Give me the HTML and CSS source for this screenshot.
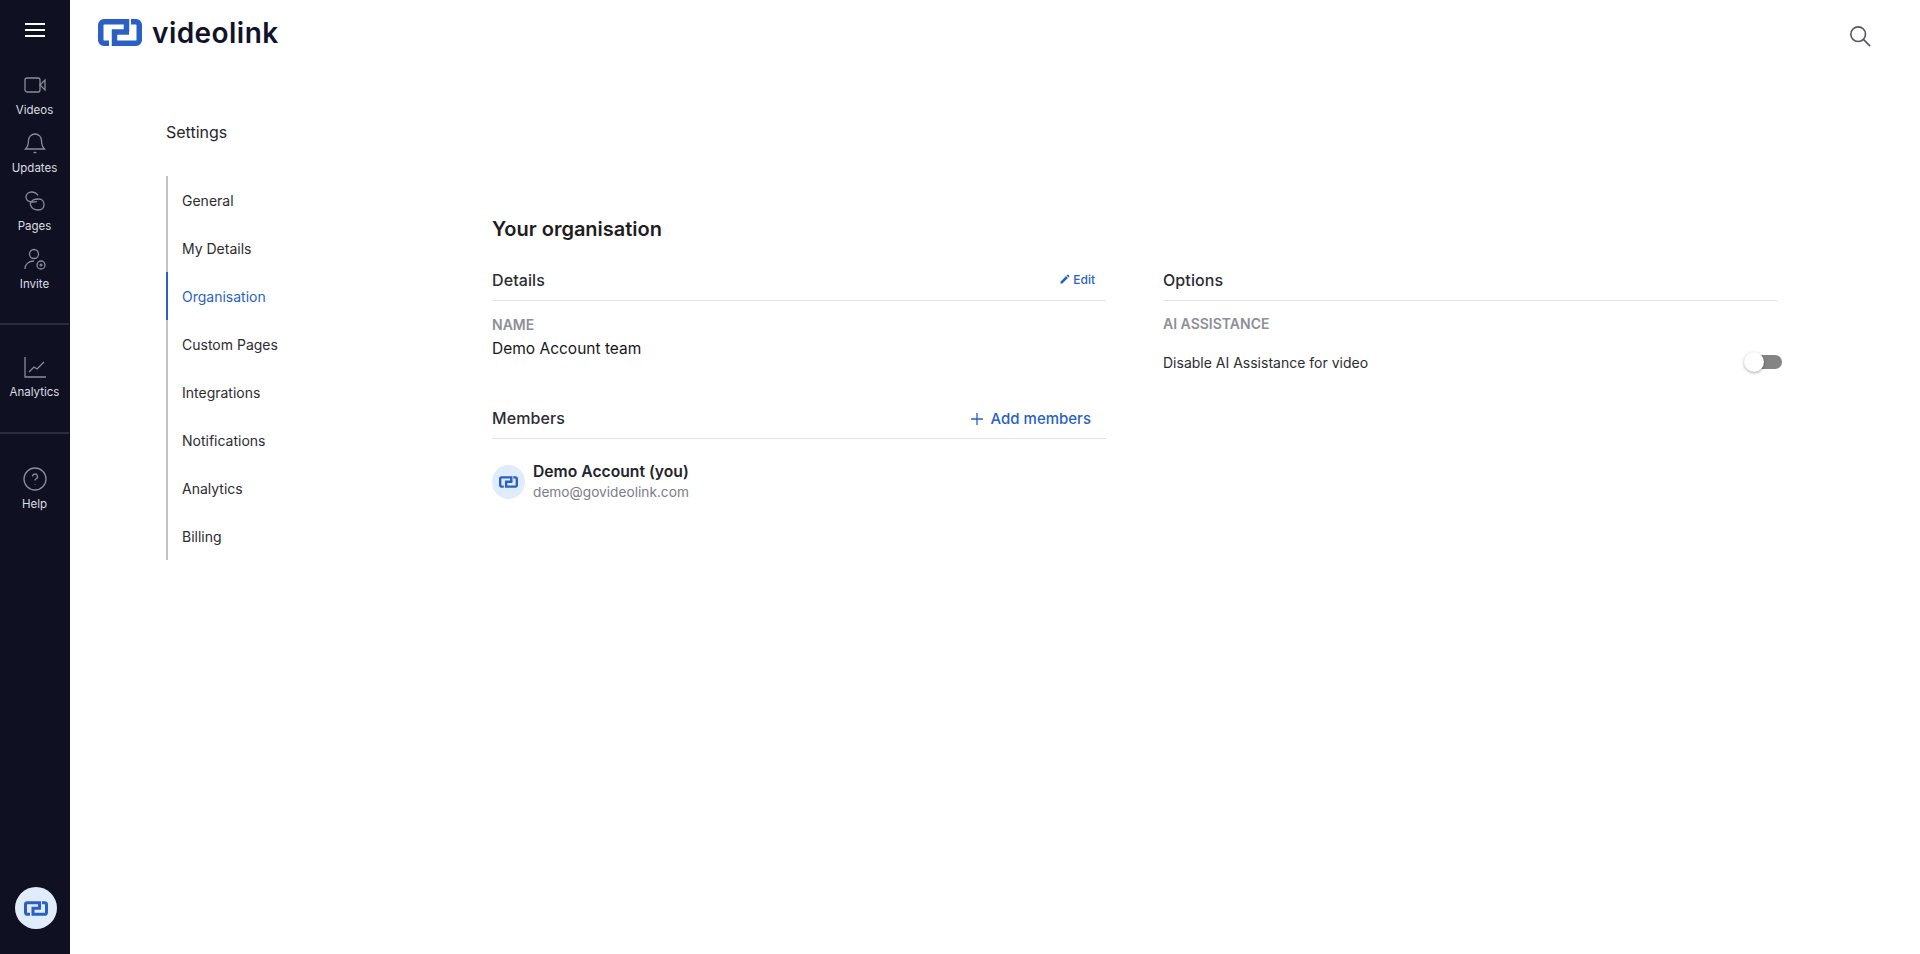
FILE: index.html
```html
<!DOCTYPE html>
<html lang="en">
<head>
  <meta charset="UTF-8" />
  <title>videolink - Settings</title>
  <link rel="stylesheet" href="styles.css">
</head>
<body>
  <svg class="svg-defs" width="0" height="0">
    <symbol id="logo-mark" viewBox="0 0 44 27">
      <path d="M11 24.250H6a3.250 3.250 0 0 1-3.250-3.250V6A3.250 3.250 0 0 1 6 2.750h22.500V13" fill="none" stroke="currentColor" stroke-width="5.500"/>
      <path d="M33 2.750h5A3.250 3.250 0 0 1 41.250 6v15a3.250 3.250 0 0 1-3.250 3.250H16.500V13H31" fill="none" stroke="currentColor" stroke-width="5.500"/>
    </symbol>
  </svg>

  <nav class="rail">
    <button class="burger"><span></span><span></span><span></span></button>
    <div class="rail-group rail-top">
      <a class="rail-item">
        <svg viewBox="0 0 24 24"><rect x="2" y="5" width="15" height="14" rx="2"/><path d="M17 12l5-5v10z"/></svg>
        Videos
      </a>
      <a class="rail-item">
        <svg viewBox="0 0 24 24"><path d="M12 3a6.500 6.500 0 0 0-6.500 6.500c0 5-1.500 7-3 8.500h19c-1.500-1.500-3-3.500-3-8.500A6.500 6.500 0 0 0 12 3z"/><path d="M10.500 21.500h3"/></svg>
        Updates
      </a>
      <a class="rail-item">
        <svg viewBox="0 0 24 24"><path d="M15 6.500C13.500 4 11 3 8.500 3 5.500 3 3 5 3 8c0 3.500 3 5 7 5 1.500 0 3-.2 4-.5"/><path d="M10 11c2-1 4-1 6-1 3 0 5 2.500 5 5.500 0 3.500-2.500 5.500-6 5.500-4 0-6.500-2.500-7.500-5-.4-1.500.6-3.500 2.500-5z"/></svg>
        Pages
      </a>
      <a class="rail-item">
        <svg viewBox="0 0 24 24"><circle cx="11" cy="7" r="4.500"/><path d="M2 22c0-5 4-8 9-8"/><circle cx="18" cy="18" r="4"/><path d="M18 16.500v3M16.500 18h3"/></svg>
        Invite
      </a>
    </div>
    <div class="rail-group rail-mid">
      <a class="rail-item">
        <svg viewBox="0 0 24 24"><path d="M2 2v20h21"/><path d="M6 17l5-5 3 2 7-7"/></svg>
        Analytics
      </a>
    </div>
    <div class="rail-group rail-help">
      <a class="rail-item">
        <svg viewBox="0 0 24 24"><circle cx="12" cy="12" r="11"/><path d="M9.500 9.500a2.500 2.500 0 1 1 3.500 2.300c-.7.400-1 1-1 1.700"/><path d="M12 17v.5"/></svg>
        Help
      </a>
    </div>
    <div class="rail-account">
      <div class="avatar avatar-lg"><svg><use href="#logo-mark"/></svg></div>
    </div>
  </nav>

  <div class="page">
    <header class="topbar">
      <div class="brand">
        <svg class="brand-mark"><use href="#logo-mark"/></svg>
        <span class="brand-name">videolink</span>
      </div>
      <svg class="search-icon" viewBox="0 0 24 24"><circle cx="10" cy="10" r="8"/><path d="M16 16l7 7"/></svg>
    </header>

    <div class="settings">
      <aside class="settings-side">
        <h1 class="settings-title">Settings</h1>
        <ul class="settings-nav">
          <li>General</li>
          <li>My Details</li>
          <li class="active">Organisation</li>
          <li>Custom Pages</li>
          <li>Integrations</li>
          <li>Notifications</li>
          <li>Analytics</li>
          <li>Billing</li>
        </ul>
      </aside>

      <main class="org">
        <h2 class="org-title">Your organisation</h2>
        <div class="org-cols">
          <div>
            <section class="block block-details">
              <div class="block-head">
                <h3>Details</h3>
                <a class="edit-link">
                  <svg viewBox="0 0 24 24"><path d="M3 17.250V21h3.750L17.810 9.940l-3.750-3.750L3 17.250zM20.710 7.040a1 1 0 0 0 0-1.410l-2.340-2.340a1 1 0 0 0-1.410 0l-1.830 1.830 3.750 3.750 1.830-1.830z"/></svg>
                  Edit
                </a>
              </div>
              <div class="field-label">NAME</div>
              <div class="field-value">Demo Account team</div>
            </section>
            <section class="block">
              <div class="block-head">
                <h3>Members</h3>
                <a class="add-link">
                  <svg viewBox="0 0 14 14"><path d="M7 1v12M1 7h12"/></svg>
                  Add members
                </a>
              </div>
              <div class="member">
                <div class="avatar avatar-sm"><svg><use href="#logo-mark"/></svg></div>
                <div>
                  <div class="member-name">Demo Account (you)</div>
                  <div class="member-email">demo@govideolink.com</div>
                </div>
              </div>
            </section>
          </div>
          <div>
            <section class="block">
              <div class="block-head">
                <h3>Options</h3>
              </div>
              <div class="field-label option-label">AI ASSISTANCE</div>
              <div class="option-row">
                <span>Disable AI Assistance for video</span>
                <span class="toggle"><span class="toggle-knob"></span></span>
              </div>
            </section>
          </div>
        </div>
      </main>
    </div>
  </div>
</body>
</html>
```

FILE: styles.css
```css
* {
  box-sizing: border-box;
}

html, body {
  height: 100%;
}

body {
  margin: 0;
  display: flex;
  background: #fff;
  color: #1d1d22;
  font-family: 'Inter', sans-serif;
  overflow: hidden;
}

.svg-defs {
  position: absolute;
}

/* left rail */
.rail {
  width: 70px;
  flex-shrink: 0;
  height: 954px;
  background: #0f1122;
  color: #dcdce2;
  display: flex;
  flex-direction: column;
}

.burger {
  display: flex;
  flex-direction: column;
  gap: 4px;
  width: 20px;
  margin: 23px 0 0 25px;
  padding: 0;
  border: none;
  background: none;
}

.burger span {
  height: 2px;
  background: #fff;
}

.rail-group {
  display: flex;
  flex-direction: column;
  border-bottom: 2px solid #2a2c3c;
  margin-right: 1px;
}

.rail-top {
  padding: 36px 0 18px;
}

.rail-mid {
  padding: 30px 0 19px;
}

.rail-help {
  border-bottom: none;
  padding-top: 33px;
}

.rail-item {
  display: flex;
  flex-direction: column;
  align-items: center;
  height: 58px;
  font-size: 11.500px;
  line-height: 16px;
  gap: 5px;
}

.rail-item svg {
  width: 24px;
  height: 24px;
  flex-shrink: 0;
  fill: none;
  stroke: #8b8c98;
  stroke-width: 1.300;
}

.rail-account {
  margin-top: auto;
  padding: 0 0 25px 15px;
}

.avatar {
  border-radius: 50%;
  background: #e0ebfc;
  color: #2a5fc4;
  display: flex;
  align-items: center;
  justify-content: center;
}

.avatar-lg {
  width: 42px;
  height: 42px;
}

.avatar-lg svg {
  width: 24px;
  height: 15px;
}

.avatar-sm {
  width: 33px;
  height: 34px;
  flex-shrink: 0;
}

.avatar-sm svg {
  width: 19px;
  height: 12px;
}

/* top bar */
.page {
  flex: 1;
  min-width: 0;
}

.topbar {
  display: flex;
  justify-content: space-between;
  align-items: flex-start;
  padding: 19px 49px 0 28px;
  height: 113px;
}

.brand {
  display: flex;
  align-items: center;
  gap: 10px;
  height: 27px;
}

.brand-mark {
  width: 44px;
  height: 27px;
  color: #2a5fc4;
}

.brand-name {
  font-size: 28px;
  font-weight: 600;
  color: #10132a;
  letter-spacing: 0.450px;
}

.search-icon {
  width: 22px;
  height: 22px;
  margin-top: 6px;
  fill: none;
  stroke: #55555f;
  stroke-width: 1.800;
}

/* settings */
.settings {
  display: flex;
  padding-left: 95px;
}

.settings-side {
  width: 327px;
  flex-shrink: 0;
}

.settings-title {
  margin: 8px 0 33px 1px;
  font-size: 16px;
  font-weight: 400;
  line-height: 22px;
  color: #27272c;
}

.settings-nav {
  list-style: none;
  margin: 0 0 0 1px;
  padding: 0;
  width: 200px;
  border-left: 2px solid #c4c4c4;
}

.settings-nav li {
  height: 48px;
  margin-left: -2px;
  padding-left: 14px;
  border-left: 2px solid transparent;
  display: flex;
  align-items: center;
  font-size: 14px;
  color: #2c2c31;
}

.settings-nav .active {
  color: #2a5fc4;
  border-left-color: #2a5fc4;
}

.org {
  width: 1285px;
  padding-top: 113px;
  margin-top: -11px;
}

.org-title {
  margin: 0;
  font-size: 20px;
  font-weight: 600;
  line-height: 28px;
  color: #1d1d22;
}

.org-cols {
  display: grid;
  grid-template-columns: 614px 614px;
  gap: 57px;
  margin-top: 20px;
}

.block-head {
  display: flex;
  align-items: center;
  justify-content: space-between;
  height: 38px;
  border-bottom: 1px solid #e2e2e4;
}

.block-head h3 {
  margin: 0 0 3px;
  font-size: 16px;
  font-weight: 500;
  letter-spacing: 0.100px;
  color: #2c2c31;
}

.block-details {
  height: 138px;
}

.edit-link {
  display: flex;
  align-items: center;
  gap: 2px;
  margin-bottom: 5px;
  padding-right: 11px;
  font-size: 12px;
  font-weight: 500;
  color: #2a5fc4;
}

.edit-link svg {
  width: 12px;
  height: 12px;
  fill: #2a5fc4;
}

.add-link {
  display: flex;
  align-items: center;
  gap: 7px;
  margin-bottom: 2px;
  padding-right: 15px;
  font-size: 15px;
  font-weight: 500;
  color: #2a5fc4;
}

.add-link svg {
  width: 14px;
  height: 14px;
  fill: none;
  stroke: #2a5fc4;
  stroke-width: 1.300;
}

.field-label {
  margin-top: 15px;
  font-size: 14px;
  line-height: 18px;
  font-weight: 600;
  color: #8e8e96;
}

.field-value {
  margin-top: 5px;
  font-size: 15.500px;
  line-height: 20px;
  color: #17171b;
}

.member {
  display: flex;
  align-items: center;
  gap: 8px;
  margin-top: 23px;
}

.member-name {
  font-size: 15.700px;
  line-height: 20px;
  font-weight: 600;
  color: #23232a;
}

.member-email {
  font-size: 13.700px;
  line-height: 20px;
  color: #7d7d85;
}

.option-label {
  margin-top: 14px;
}

.option-row {
  display: flex;
  align-items: center;
  justify-content: space-between;
  margin-top: 21px;
  font-size: 14px;
  color: #2c2c31;
}

.toggle {
  display: block;
  position: relative;
  width: 34px;
  height: 14px;
  margin: -2px -5px 0 0;
  border-radius: 7px;
  background: #848484;
}

.toggle-knob {
  position: absolute;
  left: -4px;
  top: -3px;
  width: 20px;
  height: 20px;
  border-radius: 50%;
  background: #fff;
  box-shadow: 0 1px 3px rgba(0, 0, 0, 0.350);
}
```
